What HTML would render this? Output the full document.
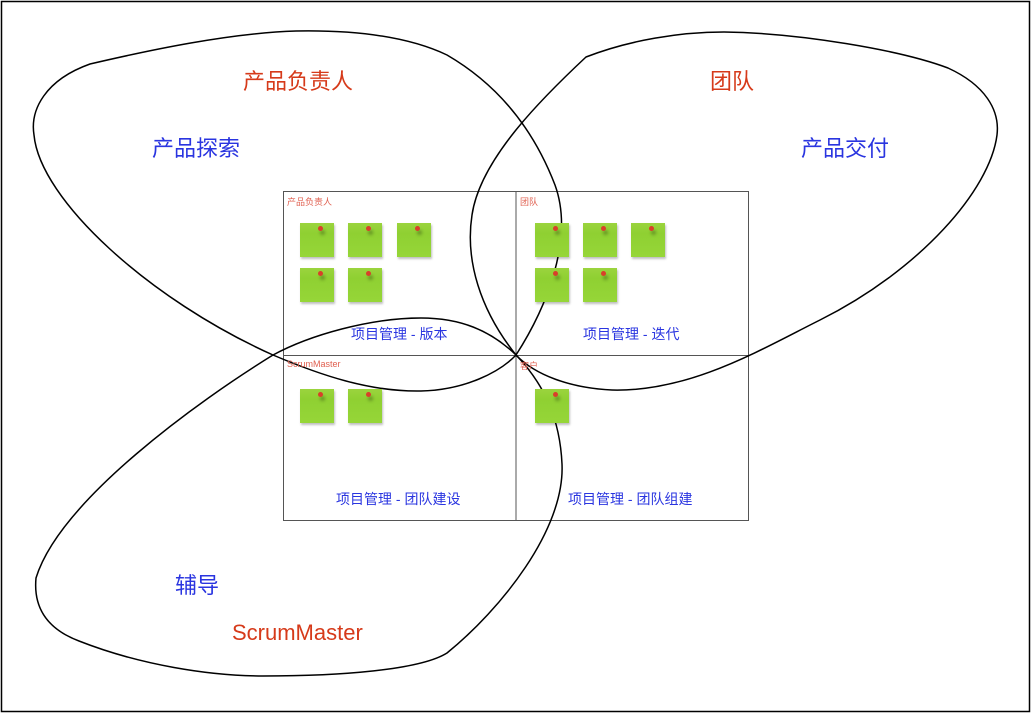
<!DOCTYPE html><html><head><meta charset="utf-8"><style>
body{margin:0;background:#fff;width:1031px;height:713px;overflow:hidden;font-family:"Liberation Sans","Noto Sans CJK SC",sans-serif}
.n{position:absolute;width:34px;height:34px;background:linear-gradient(#9bd43e,#8fd032 30%,#96d638);box-shadow:1px 2px 2px rgba(0,0,0,.25)}
.n:after{content:"";position:absolute;left:18px;top:3px;width:5px;height:5px;border-radius:50%;background:#d8402a;box-shadow:2px 4px 3px rgba(0,0,0,.3)}
.t{position:absolute;white-space:nowrap}
.b{font-size:22px}
.s{font-size:14px;color:#2a35e0}
</style></head><body>
<svg width="1031" height="713" style="position:absolute;left:0;top:0">
<rect x="1.5" y="1.5" width="1028" height="710" fill="none" stroke="#000" stroke-width="1.5"/>
<rect x="283.5" y="191.5" width="465" height="329" fill="none" stroke="#555"/>
<line x1="516" y1="191" x2="516" y2="520" stroke="#555"/>
<line x1="283" y1="355.5" x2="748" y2="355.5" stroke="#555"/>
<g fill="none" stroke="#000" stroke-width="1.5">
<path d="M516,355 C545,310 575,240 555,185 C530,120 490,80 447,55 C405,35 350,30 296,31 C230,33 150,50 90,64 C45,80 30,110 34,135 C40,200 150,300 273,355 C320,375 370,392 421,391 C465,390 500,372 516,355 Z"/>
<path d="M516,355 C480,310 465,260 472,215 C480,160 540,100 586,57 C630,40 680,32 724,32 C800,33 900,50 948,68 C985,85 1000,110 997,135 C990,190 920,270 820,320 C760,350 690,392 612,390 C570,388 535,375 516,355 Z"/>
<path d="M516,355 C490,330 460,318 421,318 C370,318 310,335 273,355 C200,400 60,500 36,578 C33,610 50,630 79,641 C140,665 210,676 263,676 C340,676 420,670 447,653 C500,610 565,530 562,464 C560,420 545,385 516,355 Z"/>
</g></svg>
<div class="t b" style="left:243px;top:64px;color:#d63a1a">产品负责人</div>
<div class="t b" style="left:152px;top:131px;color:#2a35e0">产品探索</div>
<div class="t b" style="left:710px;top:64px;color:#d63a1a">团队</div>
<div class="t b" style="left:801px;top:131px;color:#2a35e0">产品交付</div>
<div class="t b" style="left:175px;top:568px;color:#2a35e0">辅导</div>
<div class="t b" style="left:232px;top:620px;color:#d63a1a">ScrumMaster</div>
<div class="t" style="left:287px;top:195px;font-size:9px;color:#e06050">产品负责人</div>
<div class="t" style="left:520px;top:195px;font-size:9px;color:#e06050">团队</div>
<div class="t" style="left:287px;top:359px;font-size:9px;color:#e06050">ScrumMaster</div>
<div class="t" style="left:520px;top:359px;font-size:9px;color:#e06050">客户</div>
<div class="t s" style="left:351px;top:324px">项目管理 - 版本</div>
<div class="t s" style="left:583px;top:324px">项目管理 - 迭代</div>
<div class="t s" style="left:336px;top:489px">项目管理 - 团队建设</div>
<div class="t s" style="left:568px;top:489px">项目管理 - 团队组建</div>
<div class="n" style="left:300px;top:223px"></div><div class="n" style="left:348px;top:223px"></div><div class="n" style="left:397px;top:223px"></div>
<div class="n" style="left:300px;top:268px"></div><div class="n" style="left:348px;top:268px"></div>
<div class="n" style="left:535px;top:223px"></div><div class="n" style="left:583px;top:223px"></div><div class="n" style="left:631px;top:223px"></div>
<div class="n" style="left:535px;top:268px"></div><div class="n" style="left:583px;top:268px"></div>
<div class="n" style="left:300px;top:389px"></div><div class="n" style="left:348px;top:389px"></div>
<div class="n" style="left:535px;top:389px"></div>
</body></html>
